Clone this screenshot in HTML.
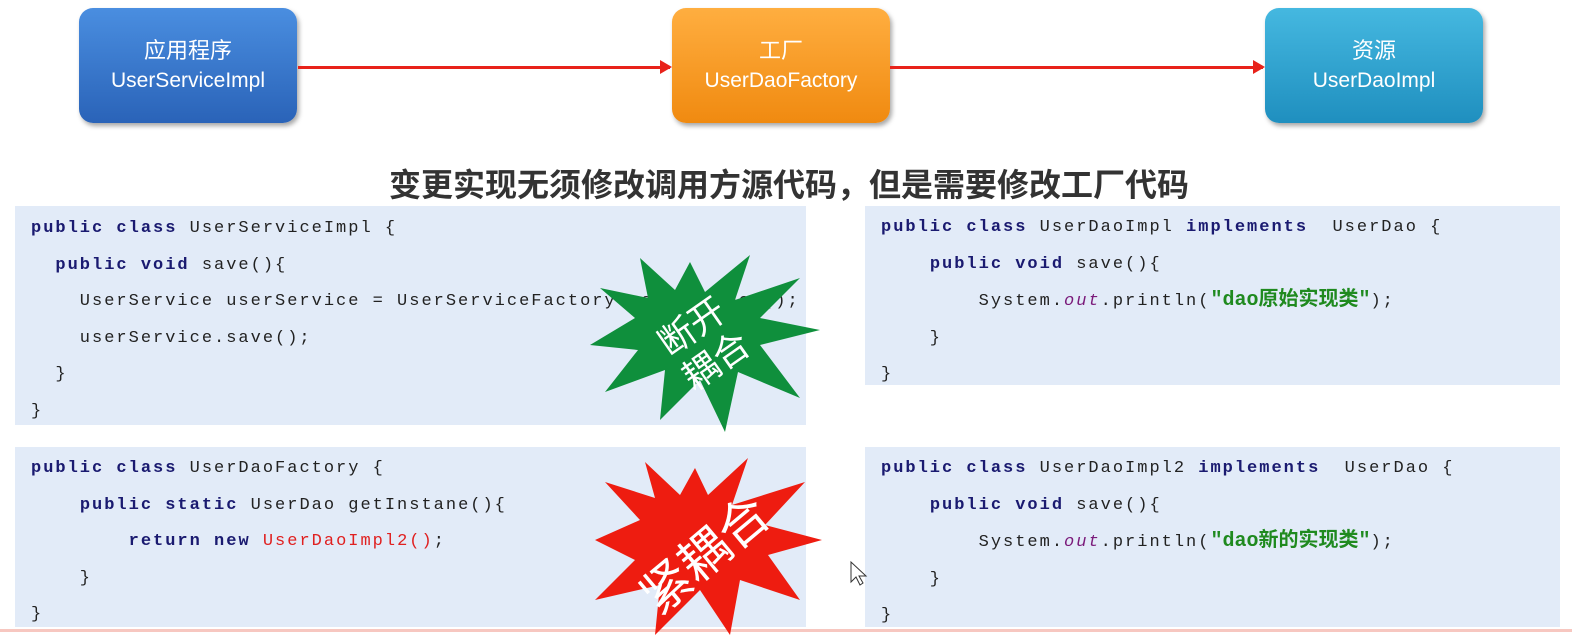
<!DOCTYPE html>
<html><head><meta charset="utf-8"><style>
body{margin:0;width:1572px;height:635px;background:#fff;position:relative;overflow:hidden;font-family:"Liberation Sans","Noto Sans CJK SC",sans-serif}
.box{position:absolute;top:8px;width:218px;height:115px;border-radius:14px;color:#fff;text-align:center;font-size:21px;line-height:30px;box-shadow:2px 3px 5px rgba(0,0,0,.35);display:flex;flex-direction:column;justify-content:center}
.box div:first-child{font-size:22px}
.b1{left:79px;background:linear-gradient(#4a8ee0,#2a63b8)}
.b2{left:672px;background:linear-gradient(#ffae40,#f08a10)}
.b3{left:1265px;background:linear-gradient(#45b8e0,#1f8fbf)}
.arr{position:absolute;height:3px;background:#e8221a;top:66px}
.arr:after{content:"";position:absolute;right:-2px;top:-6px;border-left:12px solid #e8221a;border-top:7px solid transparent;border-bottom:7px solid transparent}
.title{position:absolute;top:160px;left:0;width:1578px;text-align:center;font-size:32px;font-weight:bold;color:#333}
.panel{position:absolute;background:#e2ebf8}
pre{margin:0;position:absolute;font-family:"Liberation Mono","Noto Sans CJK SC",monospace;font-size:17px;line-height:36.6px;color:#222;letter-spacing:2px}
.k{color:#1a1a70;font-weight:bold}
.s{color:#1f8a1f;font-weight:bold;letter-spacing:0;font-size:20px}
.o{color:#7a1a7a;font-style:italic}
.r{color:#e02020}
</style></head><body>
<div class="box b1"><div>应用程序</div><div>UserServiceImpl</div></div>
<div class="box b2"><div>工厂</div><div>UserDaoFactory</div></div>
<div class="box b3"><div>资源</div><div>UserDaoImpl</div></div>
<div class="arr" style="left:298px;width:372px"></div>
<div class="arr" style="left:890px;width:373px"></div>
<div class="title">变更实现无须修改调用方源代码，但是需要修改工厂代码</div>

<div class="panel" style="left:15px;top:206px;width:791px;height:219px"></div>
<div class="panel" style="left:15px;top:447px;width:791px;height:180px"></div>
<div class="panel" style="left:865px;top:206px;width:695px;height:179px"></div>
<div class="panel" style="left:865px;top:447px;width:695px;height:180px"></div>
<div style="position:absolute;left:0;top:629px;width:1572px;height:3px;background:#f7c7c0"></div>

<pre style="left:31px;top:211px"><span class="k">public class</span> UserServiceImpl {
  <span class="k">public void</span> save(){
    UserService userService = UserServiceFactory.getInstance();
    userService.save();
  }
}</pre>
<pre style="left:31px;top:451px"><span class="k">public class</span> UserDaoFactory {
    <span class="k">public static</span> UserDao getInstane(){
        <span class="k">return new</span> <span class="r">UserDaoImpl2()</span>;
    }
}</pre>
<pre style="left:881px;top:210px"><span class="k">public class</span> UserDaoImpl <span class="k">implements</span>  UserDao {
    <span class="k">public void</span> save(){
        System.<span class="o">out</span>.println(<span class="s">"dao原始实现类"</span>);
    }
}</pre>
<pre style="left:881px;top:451px"><span class="k">public class</span> UserDaoImpl2 <span class="k">implements</span>  UserDao {
    <span class="k">public void</span> save(){
        System.<span class="o">out</span>.println(<span class="s">"dao新的实现类"</span>);
    }
}</pre>

<svg style="position:absolute;left:0;top:0" width="1572" height="635">
<polygon fill="#0f8f3c" points="750,255 735,300 800,278 760,318 820,330 760,345 800,398 738,372 725,432 700,380 660,420 665,370 605,392 638,350 590,345 635,318 600,288 648,298 640,258 675,290 690,262 705,292"/>
<g font-family="Liberation Sans,Noto Sans CJK SC,sans-serif" font-size="36" fill="#fff" transform="rotate(-35 705 345)">
<text x="705" y="335" text-anchor="middle">断开</text><text x="705" y="377" text-anchor="middle">耦合</text></g>
<polygon fill="#ee1c10" points="748,458 732,505 805,482 765,525 822,540 768,555 800,600 740,580 730,635 700,590 655,635 660,585 595,600 635,560 595,540 640,520 605,482 655,498 645,462 680,495 695,468 708,495"/>
<text x="705" y="572" text-anchor="middle" font-family="Liberation Sans,Noto Sans CJK SC,sans-serif" font-size="50" fill="#fff" transform="rotate(-40 705 555)">紧耦合</text>
<path d="M851 562 L851 582 L856 577 L860 585 L863 583 L859 576 L866 576 Z" fill="#fff" stroke="#333" stroke-width="1"/>
</svg>
</body></html>
